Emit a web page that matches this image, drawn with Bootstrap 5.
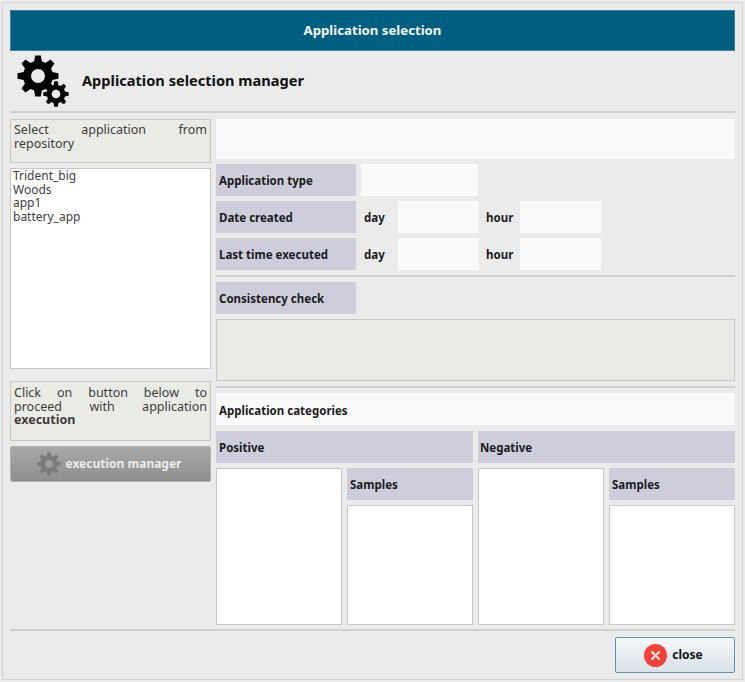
<!DOCTYPE html>
<html lang="en">

<head>
  <meta charset="UTF-8">
  <title>Application selection</title>
  <link href="https://cdn.jsdelivr.net/npm/bootstrap@5.3.2/dist/css/bootstrap.min.css" rel="stylesheet">
  <style>
    html, body { height: 100%; }
    body { background: #ebebeb; font-family: "Noto Sans", "Open Sans", sans-serif; font-size: 12px; color: #3c3c3c; overflow: hidden; }
    .win { width: 741px; height: 678px; margin: 2px; padding: 7px; border: 1px solid #d2d2d2; }
    .title-bar { height: 41px; background: #005f80; color: #f4f8fa; font-size: 13.2px; font-weight: 700; border: 1px solid #3f8199; }
    .head-row { height: 60px; padding-left: 7px; gap: 12px; }
    .head-txt { font-size: 14.6px; font-weight: 700; color: #111; }
    .divider { height: 2px; background: #cfcfcf; }
    .main-row { margin-top: 6px; gap: 5px; }
    .col-left { width: 201px; gap: 5px; }
    .col-right { width: 519px; }
    .note-box { background: #ebebe6; border: 1px solid #c8c8c2; padding: 3px; line-height: 13.5px; text-align: justify; font-size: 12.5px; }
    .note-top { height: 44px; }
    .note-low { margin-top: 7px; height: 60px; padding-top: 4px; }
    .app-list { height: 201px; background: #fff; border: 1px solid #c6c6c6; padding: 0 2px; line-height: 13.5px; font-size: 12px; }
    .exec-btn { height: 36px; background: linear-gradient(#a8a8a8, #8f8f8f); border: 1px solid #b0b0b0; border-radius: 2px; color: #ececec; font-weight: 700; font-size: 12px; gap: 5px; padding: 0 3px 0 0; }
    .lbl { height: 32px; background: #cdcddb; color: #1c1c1c; font-weight: 700; font-size: 11.5px; padding: 2px 0 0 3px; }
    .lbl-neg { padding-left: 2px; }
    .w-lbl { width: 140px; }
    .fld { height: 32px; background: #fafafa; }
    .fld-top { height: 40px; margin-bottom: 5px; }
    .fld-type { width: 117px; }
    .fld-date { width: 81px; }
    .fld-cat { padding: 3px 0 0 3px; margin-bottom: 6px; }
    .frow { gap: 5px; margin-bottom: 5px; }
    .tag { font-weight: 700; font-size: 11.5px; color: #1c1c1c; }
    .tag-day { width: 32px; padding: 2px 0 0 3px; }
    .tag-hour { width: 31px; padding: 2px 0 0 2px; }
    .lbl-check { margin: 5px 0; }
    .check-box { height: 62px; background: #ebebe6; border: 1px solid #c8c8c2; }
    .rule-mid { margin: 5px 0; }
    .rule-end { margin-top: 4px; }
    .cat-row { gap: 5px; }
    .cat-col { width: 257px; gap: 5px; }
    .list-row { gap: 5px; }
    .list-side { width: 126px; gap: 5px; }
    .white-box { background: #fff; border: 1px solid #c6c6c6; }
    .box-tall { width: 126px; height: 157px; }
    .box-low { height: 120px; }
    .foot-row { margin-top: 6px; }
    .close-btn { width: 120px; height: 36px; background: linear-gradient(#f4f7f9, #d9e2e9); border: 1px solid #5d94b4; border-radius: 2px; color: #151515; font-weight: 700; font-size: 12px; gap: 5px; padding: 0 3px 0 0; }
  </style>
</head>

<body>
  <svg width="0" height="0" class="d-block">
    <symbol id="gear" viewBox="-21 -21 42 42">
      <circle r="11" fill="none" stroke="currentColor" stroke-width="8"/>
      <g fill="currentColor">
        <path id="tooth" d="M-4 -14L-2.8 -20.5H2.8L4 -14z"/>
        <use href="#tooth" transform="rotate(45)"/>
        <use href="#tooth" transform="rotate(90)"/>
        <use href="#tooth" transform="rotate(135)"/>
        <use href="#tooth" transform="rotate(180)"/>
        <use href="#tooth" transform="rotate(225)"/>
        <use href="#tooth" transform="rotate(270)"/>
        <use href="#tooth" transform="rotate(315)"/>
      </g>
    </symbol>
  </svg>

  <div class="win">
    <div class="title-bar d-flex align-items-center justify-content-center">Application selection</div>

    <div class="head-row d-flex align-items-center">
      <svg width="53" height="52" viewBox="17 54 53 52" color="#000">
        <use href="#gear" x="17" y="54" width="42" height="42"/>
        <use href="#gear" x="43" y="80" width="26" height="26"/>
      </svg>
      <div class="head-txt">Application selection manager</div>
    </div>
    <div class="divider"></div>

    <div class="d-flex main-row">
      <div class="col-left d-flex flex-column">
        <div class="note-box note-top">Select application from repository</div>
        <div class="app-list">
          <div>Trident_big</div>
          <div>Woods</div>
          <div>app1</div>
          <div>battery_app</div>
        </div>
        <div class="note-box note-low">Click on button below to proceed with application <b>execution</b></div>
        <button type="button" class="exec-btn d-flex align-items-center justify-content-center">
          <svg width="24" height="24" color="#7b7b7b"><use href="#gear" width="24" height="24"/></svg>
          execution manager
        </button>
      </div>

      <div class="col-right d-flex flex-column">
        <div class="fld fld-top"></div>
        <div class="d-flex frow">
          <div class="lbl w-lbl d-flex align-items-center">Application type</div>
          <div class="fld fld-type"></div>
        </div>
        <div class="d-flex frow align-items-center">
          <div class="lbl w-lbl d-flex align-items-center">Date created</div>
          <div class="tag tag-day">day</div>
          <div class="fld fld-date"></div>
          <div class="tag tag-hour">hour</div>
          <div class="fld fld-date"></div>
        </div>
        <div class="d-flex frow align-items-center">
          <div class="lbl w-lbl d-flex align-items-center">Last time executed</div>
          <div class="tag tag-day">day</div>
          <div class="fld fld-date"></div>
          <div class="tag tag-hour">hour</div>
          <div class="fld fld-date"></div>
        </div>
        <div class="divider"></div>
        <div class="lbl w-lbl d-flex align-items-center lbl-check">Consistency check</div>
        <div class="check-box"></div>
        <div class="divider rule-mid"></div>
        <div class="fld tag fld-cat d-flex align-items-center">Application categories</div>

        <div class="d-flex cat-row">
          <div class="cat-col d-flex flex-column">
            <div class="lbl d-flex align-items-center">Positive</div>
            <div class="d-flex list-row">
              <div class="white-box box-tall"></div>
              <div class="list-side d-flex flex-column">
                <div class="lbl d-flex align-items-center">Samples</div>
                <div class="white-box box-low"></div>
              </div>
            </div>
          </div>
          <div class="cat-col d-flex flex-column">
            <div class="lbl lbl-neg d-flex align-items-center">Negative</div>
            <div class="d-flex list-row">
              <div class="white-box box-tall"></div>
              <div class="list-side d-flex flex-column">
                <div class="lbl d-flex align-items-center">Samples</div>
                <div class="white-box box-low"></div>
              </div>
            </div>
          </div>
        </div>
      </div>
    </div>

    <div class="divider rule-end"></div>
    <div class="foot-row d-flex justify-content-end">
      <button type="button" class="close-btn d-flex align-items-center justify-content-center">
        <svg width="23" height="23" viewBox="0 0 23 23">
          <circle cx="11.5" cy="11.5" r="11.5" fill="#f44336"/>
          <path d="M8 8l7 7M15 8l-7 7" stroke="#fbe3e0" stroke-width="2.2" stroke-linecap="round"/>
        </svg>
        close
      </button>
    </div>
  </div>
</body>

</html>
